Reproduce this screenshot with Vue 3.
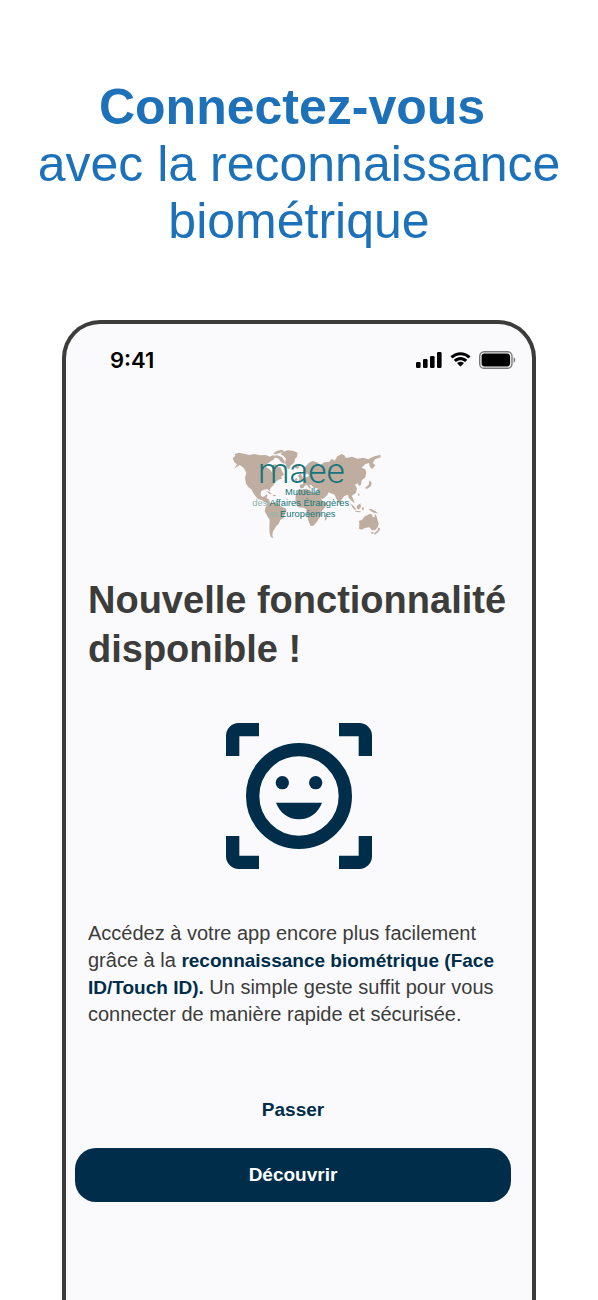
<script setup>
import { ref } from 'vue'

const time = ref('9:41')

// signal bars, from the shortest to the tallest
const bars = [
  { x: 0, height: 6 },
  { x: 7, height: 9 },
  { x: 14, height: 12 },
  { x: 21, height: 16 }
]
</script>

<template>
  <div class="page">
    <header class="hero">
      <h1><strong>Connectez-vous&nbsp;</strong><br>avec la reconnaissance<br>biométrique</h1>
    </header>

    <main class="phone">
      <!-- status bar -->
      <div class="status-bar">
        <span class="time">{{ time }}</span>
        <div class="status-icons">
          <svg width="26" height="16" viewBox="0 0 26 16">
            <rect
              v-for="bar in bars"
              :key="bar.x"
              :x="bar.x"
              :y="16 - bar.height"
              width="4.6"
              :height="bar.height"
              rx="1.3"
            />
          </svg>
          <svg width="21" height="16" viewBox="0 0 21 16">
            <path d="M10.5 3.2c2.9 0 5.6 1.1 7.6 3.1.2.2.4.2.6 0l1.5-1.5c.2-.2.2-.5 0-.7C14.8-1 6.2-1 .8 4.1c-.2.2-.2.5 0 .7l1.500 1.500c.2.2.4.2.6 0 2-2 4.700-3.100 7.600-3.100z" />
            <path d="M10.5 8.2c1.6 0 3.1.6 4.2 1.6.2.2.5.2.7 0l1.5-1.5c.2-.2.2-.5 0-.7-3.6-3.4-9.2-3.4-12.8 0-.2.2-.2.5 0 .7l1.5 1.5c.2.2.5.2.7 0 1.1-1 2.6-1.6 4.2-1.6z" />
            <path d="M13.6 11.5c.2-.2.2-.5 0-.7-1.8-1.5-4.4-1.5-6.2 0-.2.2-.2.5 0 .7l2.7 2.7c.2.2.5.2.7 0z" />
          </svg>
          <svg width="37" height="18" viewBox="0 0 37 18">
            <rect x="0.7" y="0.7" width="32.3" height="16.6" rx="4.6" fill="none" stroke="#77777b" stroke-width="1.4" />
            <rect x="2.6" y="2.6" width="28.5" height="12.8" rx="2.8" />
            <path d="M34.7 6.3v5.4c2-.8 2-4.6 0-5.4z" fill="#77777b" />
          </svg>
        </div>
      </div>

      <!-- logo -->
      <div class="logo">
        <svg width="165" height="105" viewBox="0 0 495 315" role="img" aria-label="maee">
          <g fill="#bfae9f">
            <!-- Americas -->
            <path d="M23 54L31 48L29 42L42 38L58 41L72 45L88 42L105 46L122 45L135 50L143 46L150 52L145 60L138 63L126 72L124 82L133 87L140 96L143 85L144 74L153 73L160 82L166 82L172 95L177 104L168 110L171 116L160 119L151 127L145 136L137 144L134 154L127 147L116 149L108 154L107 165L112 171L119 169L124 163L128 166L124 174L132 178L134 187L140 190L150 186L161 191L167 199L181 205L185 211L180 220L176 234L166 240L161 251L154 258L148 268L144 274L142 286L145 294L138 292L134 280L133 264L134 240L128 230L119 214L121 203L128 191L119 185L111 181L98 176L87 163L79 148L72 143L63 131L60 114L64 98L56 83L44 75L36 80L27 87L36 73L28 67Z" />
            <path d="M122 153L134 156L141 161L133 161ZM144 164L153 165L151 169L144 168Z" />
            <!-- Greenland and the northern islands -->
            <path d="M172 36L188 31L204 32L218 38L216 50L210 57L208 68L198 76L192 88L186 84L180 68L183 56L176 48L167 43ZM144 41L155 33L170 29L177 33L166 39L150 43ZM142 47L158 46L171 52L179 63L179 72L168 66L161 56L148 52ZM209 79L219 76L223 82L217 86L210 84Z" />
            <!-- Eurasia -->
            <path d="M226 145L224 134L235 132L232 121L241 113L252 108L248 101L241 102L234 95L238 83L251 69L262 63L276 67L286 75L298 67L314 65L319 56L329 62L337 49L350 42L358 46L363 54L381 50L398 56L414 53L430 58L444 50L466 44L467 52L450 58L443 68L451 76L441 88L434 79L432 69L420 73L410 83L421 88L424 100L420 113L410 121L408 134L402 138L398 130L390 134L396 145L393 158L380 168L384 175L389 190L380 183L371 173L369 164L358 168L349 179L347 193L341 188L334 176L329 164L318 160L311 157L307 166L292 178L285 170L276 152L278 145L266 144L260 136L253 134L258 144L254 146L247 136L241 135L235 144Z" />
            <path d="M219 108L226 98L233 112L232 121L220 123L224 116ZM213 113L218 118L214 123L209 120ZM434 121L440 128L438 138L427 146L419 145L431 134ZM400 160L404 162L402 169L399 165Z" />
            <!-- Africa -->
            <path d="M222 149L246 146L252 154L264 158L280 156L287 171L294 187L307 188L300 202L290 214L287 228L280 239L273 249L264 258L257 258L250 242L246 222L244 208L236 203L220 202L211 190L212 168ZM301 227L307 221L305 238L299 242Z" />
            <!-- Oceania -->
            <path d="M376 190L386 198L394 208L390 210L382 202ZM396 197L406 190L408 201L401 209L395 204ZM411 203L417 201L415 211L411 210ZM430 206L441 208L452 214L459 220L446 218L436 212ZM391 212L408 214L405 217L391 215Z" />
            <path d="M402 243L413 238L419 229L427 226L433 222L441 223L443 231L448 232L450 221L455 230L458 241L461 251L458 262L451 270L441 271L433 262L420 264L410 269L402 266L403 253ZM439 275L446 276L443 282L439 281ZM461 262L466 267L460 276L450 284L446 281L458 271Z" />
          </g>
          <text class="brand" x="99" y="128">maee</text>
          <g class="tagline">
            <text x="180" y="165">Mutuelle</text>
            <text x="82" y="197"><tspan class="pale">des</tspan> Affaires Étrangères</text>
            <text x="134" y="231"><tspan class="pale">et</tspan> Européennes</text>
          </g>
        </svg>
      </div>

      <section class="content">
        <h2>Nouvelle fonctionnalité disponible !</h2>

        <svg class="face-icon" width="146" height="146" viewBox="0 0 438 438">
          <path d="M0 99V38A38 38 0 0 1 38 0H99V40H40V99zM339 0H400A38 38 0 0 1 438 38V99H398V40H339zM438 339V400A38 38 0 0 1 400 438H339V398H398V339zM99 438H38A38 38 0 0 1 0 400V339H40V398H99z" />
          <circle cx="219" cy="219" r="139" fill="none" stroke="#002d4a" stroke-width="40" />
          <circle cx="169" cy="179" r="20" />
          <circle cx="269" cy="179" r="20" />
          <path d="M150 239H288C277 269 251 289 219 289S161 269 150 239z" />
        </svg>

        <p>
          Accédez à votre app encore plus facilement grâce à la
          <strong>reconnaissance biométrique (Face ID/Touch ID).</strong>
          Un simple geste suffit pour vous connecter de manière rapide et sécurisée.
        </p>
      </section>

      <!-- actions -->
      <div class="actions">
        <button type="button" class="skip">Passer</button>
        <button type="button" class="discover">Découvrir</button>
      </div>
    </main>
  </div>
</template>

<style>
body {
  margin: 0;
  background-color: #fff;
}
</style>

<style scoped>
.page {
  display: flex;
  flex-direction: column;
  min-height: 100vh;
  font-family: "Liberation Sans", Arial, sans-serif;
}

.hero {
  padding: 79px 16px 70px;
  text-align: center;
}

h1 {
  margin: 0;
  font-size: 50px;
  line-height: 57px;
  font-weight: normal;
  color: #1d71b8;
}

.phone {
  flex: 1;
  margin: 0 62px;
  border: 4px solid #3c3c3b;
  border-bottom: none;
  border-radius: 38px 38px 0 0;
  background-color: #fafafc;
}

.status-bar {
  display: flex;
  justify-content: space-between;
  align-items: center;
  padding: 24px 16px 0 44px;
}

.time {
  font-family: Inter, sans-serif;
  font-size: 22px;
  line-height: 24px;
  font-weight: 600;
  color: #000;
}

.status-icons {
  display: flex;
  align-items: center;
  gap: 8px;
}

.logo {
  padding: 68px 0 0 16px;
}

.logo svg {
  display: block;
  margin: 0 auto;
}

.brand {
  font-family: Roboto, sans-serif;
  font-size: 106px;
  font-weight: 300;
  fill: #16757b;
}

.tagline {
  font-size: 28px;
  fill: #16757b;
}

.pale {
  fill: #8db5ad;
}

.content {
  padding: 31px 22px 0;
}

h2 {
  margin: 0;
  font-size: 38px;
  line-height: 49px;
  color: #3c3c3b;
}

.face-icon {
  display: block;
  margin: 49px auto 51px;
  fill: #002d4a;
}

p {
  margin: 0;
  font-size: 20px;
  line-height: 27px;
  color: #3c3c3b;
}

p strong {
  font-size: 19px;
  color: #002d4a;
}

.actions {
  display: flex;
  flex-direction: column;
  gap: 16px;
  padding: 60px 21px 40px 9px;
}

button {
  border: none;
  font-family: inherit;
  font-size: 19px;
  font-weight: bold;
  cursor: pointer;
}

.skip {
  height: 44px;
  background: none;
  color: #002d4a;
}

.discover {
  height: 54px;
  border-radius: 21px;
  background-color: #002d4a;
  color: #fff;
}
</style>
